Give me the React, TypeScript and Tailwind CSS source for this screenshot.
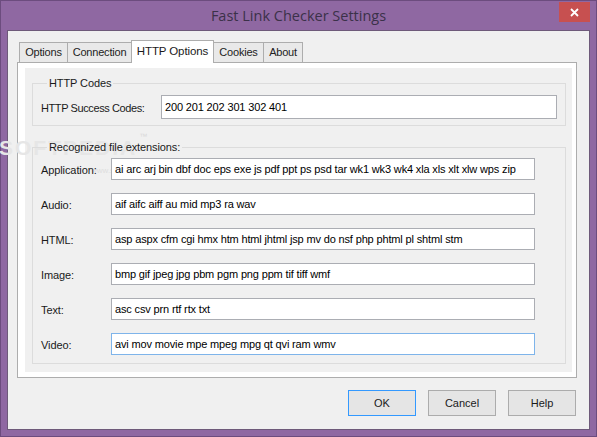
import React from "react";

const ui = { fontFamily: '"Liberation Sans", Arial, sans-serif' };

const tabs: [string, string][] = [
    ["Options", "w-[49px]"],
    ["Connection", "w-[65px]"],
    ["HTTP Options", "w-[83px]"],
    ["Cookies", "w-[51px]"],
    ["About", "w-[40px]"],
];

const extensions: [string, string][] = [
    ["Application:", "ai arc arj bin dbf doc eps exe js pdf ppt ps psd tar wk1 wk3 wk4 xla xls xlt xlw wps zip"],
    ["Audio:", "aif aifc aiff au mid mp3 ra wav"],
    ["HTML:", "asp aspx cfm cgi hmx htm html jhtml jsp mv do nsf php phtml pl shtml stm"],
    ["Image:", "bmp gif jpeg jpg pbm pgm png ppm tif tiff wmf"],
    ["Text:", "asc csv prn rtf rtx txt"],
    ["Video:", "avi mov movie mpe mpeg mpg qt qvi ram wmv"],
];

function Field({ value, focused, className }: { value: string; focused?: boolean; className: string }) {
    return (
        <div
            className={`h-[22px] bg-white border flex items-center pl-[3px] text-[11px] tracking-[-0.15px] text-black whitespace-nowrap overflow-hidden ${
                focused ? "border-[#7eb4ea]" : "border-[#abadb3]"
            } ${className}`}
        >
            {value}
        </div>
    );
}

export default function App() {
    return (
        <div
            className="w-[597px] h-[437px] bg-[#8f68a2] border border-[#6c4c7e] flex flex-col text-[#1a1a1a]"
            style={ui}
        >
            {/* title bar */}
            <div className="h-[29px] relative flex items-center justify-center shrink-0">
                <span
                    className="text-[14.5px] text-[#3b3149] mt-[1px]"
                    style={{ fontFamily: '"Open Sans", "Noto Sans", sans-serif' }}
                >
                    Fast Link Checker Settings
                </span>
                <div className="absolute right-[6px] top-[1px] w-[31px] h-[20px] bg-[#c75050] flex items-center justify-center">
                    <svg width="9" height="9" viewBox="0 0 9 9">
                        <path d="M1 1 L8 8 M8 1 L1 8" stroke="white" strokeWidth="1.8" />
                    </svg>
                </div>
            </div>

            {/* client area */}
            <div className="flex-1 mx-[6px] mb-[6px] bg-[#f0f0f0] border border-[#6e5a7a] flex flex-col relative">
                <div className="pl-[9px] pr-[12px] pt-[9px] flex flex-col">
                    {/* tab strip */}
                    <div className="flex items-end pl-[2px] h-[22px] relative z-10">
                        {tabs.map(([t, w]) => {
                            const active = t === "HTTP Options";
                            return active ? (
                                <div
                                    key={t}
                                    className={`${w} h-[23px] -mb-[1px] -mr-px bg-white border border-b-0 border-[#adadad] flex items-center justify-center text-[11.5px] tracking-[-0.1px] relative z-10`}
                                >
                                    {t}
                                </div>
                            ) : (
                                <div
                                    key={t}
                                    className={`${w} h-[20px] bg-[#e9e9e9] border border-[#adadad] border-b-0 -mr-px flex items-center justify-center text-[11px] tracking-[-0.2px] text-[#222]`}
                                >
                                    {t}
                                </div>
                            );
                        })}
                    </div>

                    {/* tab panel */}
                    <div className="h-[316px] border border-[#adadad] bg-white pl-[7px] pr-[4px] pt-[5px] pb-[5px]">
                        <div className="h-full bg-[#f0f0f0] px-[7px] pr-[6px] pt-[9px] flex flex-col relative">
                            {/* watermark */}
                            <div className="absolute left-[-26px] top-[64px] pointer-events-none select-none flex items-start">
                                <span className="text-[21px] font-bold tracking-[2px] text-[#e6e6e6]">SOFTPEDIA</span>
                                <span className="text-[8px] text-[#d9d9d9] ml-[2px] -mt-[1px]">™</span>
                            </div>
                            <div className="absolute left-[66px] top-[97px] text-[8px] text-[#dedede] pointer-events-none select-none">
                                www.softpedia.com
                            </div>

                            <fieldset className="border border-[#dcdcdc] h-[49px] px-[8px] relative">
                                <legend className="ml-[6px] px-[2px] text-[11px] tracking-[-0.1px] leading-[12px]">
                                    HTTP Codes
                                </legend>
                                <div className="flex items-center mt-[6px]">
                                    <span className="w-[120px] text-[11px] tracking-[-0.4px] mt-[2px]">HTTP Success Codes:</span>
                                    <Field value="200 201 202 301 302 401" className="flex-1 h-[24px]" />
                                </div>
                            </fieldset>

                            <fieldset className="border border-[#dcdcdc] mt-[15px] h-[223px] px-[8px] relative">
                                <legend className="ml-[6px] px-[2px] text-[11px] tracking-[-0.1px] leading-[12px]">
                                    Recognized file extensions:
                                </legend>
                                <div className="flex flex-col gap-[13px] mt-[5px]">
                                    {extensions.map(([label, value]) => (
                                        <div key={label} className="flex items-center">
                                            <span className="w-[70px] text-[11px] tracking-[-0.1px] mt-[3px]">{label}</span>
                                            <Field value={value} focused={label === "Video:"} className="w-[424px]" />
                                        </div>
                                    ))}
                                </div>
                            </fieldset>
                        </div>
                    </div>
                </div>

                {/* buttons */}
                <div className="flex justify-end gap-[12px] pr-[13px] mt-[12px]">
                    {["OK", "Cancel", "Help"].map((b) => (
                        <div
                            key={b}
                            className={`w-[68px] h-[26px] flex items-center justify-center text-[11px] bg-[#e5e5e5] border ${
                                b === "OK" ? "border-[#3399ff]" : "border-[#acacac]"
                            }`}
                        >
                            {b}
                        </div>
                    ))}
                </div>
            </div>
        </div>
    );
}
